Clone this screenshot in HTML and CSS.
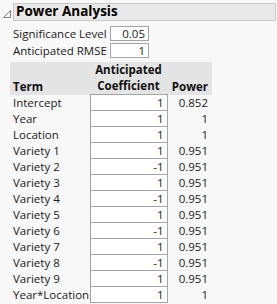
FILE: index.html
```html
<!DOCTYPE html>
<html>
<head>
<meta charset="utf-8">
<link rel="stylesheet" href="styles.css">
</head>
<body>
<div class="report">
  <div class="outline">
    <svg class="disclosure" width="10" height="10" viewBox="0 0 10 10"><path d="M1.5 8.5 L8.5 1.5 L8.5 8.5 Z" fill="none" stroke="#808080" stroke-width="1"/></svg>
    <div class="title">Power Analysis</div>
  </div>
  <div class="content">
    <div class="params">
      <span class="plabel">Significance Level</span><span class="pbox">0.05</span>
      <span class="plabel">Anticipated RMSE</span><span class="pbox">1</span>
    </div>
    <table class="power">
      <thead>
        <tr><th class="term">Term</th><th class="coef">Anticipated<br>Coefficient</th><th class="pow">Power</th></tr>
      </thead>
      <tbody>
        <tr><td class="term">Intercept</td><td class="coef">1</td><td class="pow">0.852</td></tr>
        <tr><td class="term">Year</td><td class="coef">1</td><td class="pow">1</td></tr>
        <tr><td class="term">Location</td><td class="coef">1</td><td class="pow">1</td></tr>
        <tr><td class="term">Variety 1</td><td class="coef">1</td><td class="pow">0.951</td></tr>
        <tr><td class="term">Variety 2</td><td class="coef">-1</td><td class="pow">0.951</td></tr>
        <tr><td class="term">Variety 3</td><td class="coef">1</td><td class="pow">0.951</td></tr>
        <tr><td class="term">Variety 4</td><td class="coef">-1</td><td class="pow">0.951</td></tr>
        <tr><td class="term">Variety 5</td><td class="coef">1</td><td class="pow">0.951</td></tr>
        <tr><td class="term">Variety 6</td><td class="coef">-1</td><td class="pow">0.951</td></tr>
        <tr><td class="term">Variety 7</td><td class="coef">1</td><td class="pow">0.951</td></tr>
        <tr><td class="term">Variety 8</td><td class="coef">-1</td><td class="pow">0.951</td></tr>
        <tr><td class="term">Variety 9</td><td class="coef">1</td><td class="pow">0.951</td></tr>
        <tr><td class="term">Year*Location</td><td class="coef">1</td><td class="pow">1</td></tr>
      </tbody>
    </table>
  </div>
</div>
</body>
</html>
```
FILE: styles.css
```css
html, body {
  margin: 0;
  padding: 0;
  background: #f8f8f8;
}
body {
  font-family: "Open Sans", "Noto Sans", sans-serif;
  font-size: 11.5px;
  color: #1a1a1a;
}
.report {
  width: 277px;
  height: 304px;
  overflow: hidden;
}
.outline {
  display: flex;
  align-items: flex-start;
  padding-top: 3px;
}
.disclosure {
  width: 10px;
  height: 10px;
  margin: 6px 1px 0 2px;
  flex: none;
}
.title {
  box-sizing: border-box;
  width: 263px;
  height: 18px;
  background: #e9e9e9;
  border: 1px solid #c9c9c9;
  font-weight: bold;
  font-size: 13.5px;
  line-height: 15px;
  padding-left: 2px;
  color: #000;
}
.content {
  padding-left: 10px;
  padding-top: 5px;
}
.params {
  display: grid;
  grid-template-columns: 97px 39px;
  row-gap: 2px;
  align-items: center;
  padding-left: 3px;
}
.plabel {
  line-height: 15px;
  white-space: nowrap;
}
.pbox {
  box-sizing: border-box;
  height: 15px;
  line-height: 13px;
  background: #fff;
  border: 1px solid #a5a5a5;
  text-align: right;
  padding-right: 3px;
}
.power {
  border-collapse: collapse;
  margin-top: 4px;
  white-space: nowrap;
}
.power th {
  background: #e4e4e4;
  font-weight: bold;
  vertical-align: bottom;
  line-height: 16px;
  height: 31px;
  padding: 0;
  color: #111;
}
.power th.term {
  text-align: left;
  padding-left: 3px;
  width: 77px;
}
.power th.coef {
  text-align: center;
  width: 77px;
}
.power th.pow {
  text-align: right;
  padding-right: 4px;
  width: 41px;
}
.power td {
  padding: 0;
  height: 15px;
  line-height: 15px;
}
.power td.term {
  padding-left: 3px;
}
.power td.coef {
  background: #fff;
  border: 1px solid #a5a5a5;
  text-align: right;
  padding-right: 3px;
}
.power td.pow {
  text-align: right;
  padding-right: 4px;
}
```
